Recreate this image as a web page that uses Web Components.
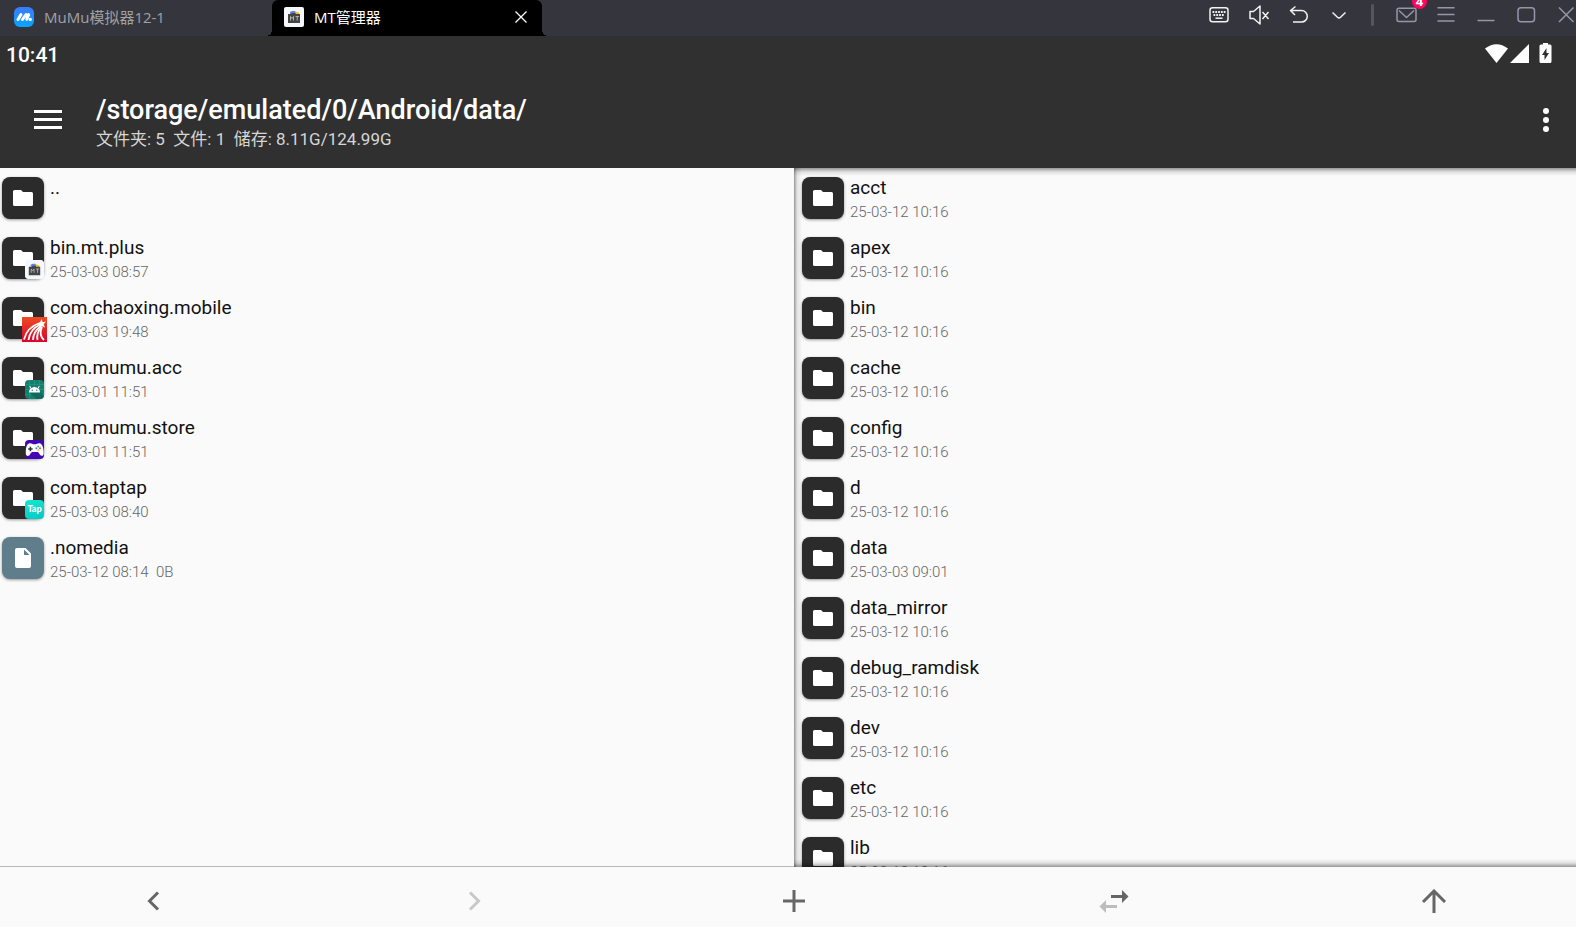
<!DOCTYPE html>
<html lang="zh-CN">
<head>
<meta charset="utf-8">
<title>MT管理器</title>
<style>
    html, body {
        height: 100%;
    }

    body {
        margin: 0;
        overflow: hidden;
        font-family: Roboto, "Noto Sans CJK SC", sans-serif;
        background: #fafafa;
    }
</style>
</head>
<body>
<emulator-window>
    <title-bar slot="titlebar">
        <window-tab label="MuMu模拟器12-1" icon="mumu"></window-tab>
        <window-tab label="MT管理器" icon="mt" active></window-tab>
    </title-bar>
    <status-bar time="10:41"></status-bar>
    <app-header>
        <span slot="path">/storage/emulated/0/Android/data/</span>
        <span slot="info">文件夹: 5&nbsp; 文件: 1&nbsp; 储存: 8.11G/124.99G</span>
    </app-header>
    <split-view>
        <file-list slot="left" data="local"></file-list>
        <file-list slot="right" data="root"></file-list>
    </split-view>
    <nav-bar></nav-bar>
</emulator-window>

<script>
const icons = {
    mumu: `<svg width="20" height="20" viewBox="0 0 20 20">
        <defs><linearGradient id="g" x1="0" y1="0" x2="0" y2="1"><stop offset="0" stop-color="#3a7bff"/><stop offset="1" stop-color="#08a6ff"/></linearGradient></defs>
        <rect width="20" height="20" rx="6" fill="url(#g)"/>
        <path d="M4 12.500 7 7.500M8.500 12.500 12 7.500M12.800 12.300 14.600 7.600" stroke="#fff" stroke-width="3" stroke-linecap="round"/>
        <circle cx="16.200" cy="12.400" r="1.700" fill="#fff"/></svg>`,
    mt: `<svg width="20" height="20" viewBox="0 0 20 20">
        <rect width="20" height="20" rx="2" fill="#f6f8ff"/>
        <path d="M6 7V5l2-1h3l2 3z" fill="#5b83ea"/><path d="M11 4.500l4 1V8h-3z" fill="#f2bb2c"/>
        <path d="M4 7h3l1-1h3l1 1h4v9H4z" fill="#454545"/>
        <path d="M6.500 13.500v-4l1.500 2 1.500-2v4M11.500 9.500h3.500M13.200 9.500v4" fill="none" stroke="#b8b8b8" stroke-width=".9"/></svg>`,
    chaoxing: `<svg width="25" height="25" viewBox="0 0 25 25">
        <defs><linearGradient id="g" x1="0" y1="0" x2="0" y2="1"><stop offset="0" stop-color="#ee4a24"/><stop offset="1" stop-color="#d8042a"/></linearGradient></defs>
        <rect width="25" height="25" fill="url(#g)"/>
        <g fill="none" stroke="#fff" stroke-width="1.800"><path d="M2 22.500Q5 10 18 6"/><path d="M6.500 23Q8 12 18.500 7.500"/><path d="M11 23Q11 15 19 9"/><path d="M15.500 23Q14 16 19.500 10"/><path d="M22 23Q16.500 18 20 10"/></g>
        <path d="M19.500 2l1.200 3.200 3.300-.6-2.300 2.600 1.300 3.200-3.200-1.200-2.700 2.300.2-3.600-3-1.500 3.700-1z" fill="#fff"/></svg>`,
    acc: `<svg width="19" height="19" viewBox="0 0 19 19">
        <rect width="19" height="19" rx="4" fill="#13806e"/>
        <path d="M0 4.500h19M0 9.500h19M0 14.500h19M4.500 0v19M9.500 0v19M14.500 0v19" stroke="#2b9584" stroke-width=".6"/>
        <path d="M15 12l4 4-1 2-2 1h-5l-7-7z" fill="#0a6053" opacity=".7"/>
        <path d="M4 12.500a5.500 5.500 0 0 1 11 0z" fill="#fff"/>
        <path d="M6 8.500 4.800 6M13 8.500 14.200 6" stroke="#fff"/>
        <circle cx="7.200" cy="10.300" r=".7" fill="#13806e"/><circle cx="11.800" cy="10.300" r=".7" fill="#13806e"/></svg>`,
    store: `<svg width="19" height="19" viewBox="0 0 19 19">
        <rect width="19" height="19" rx="4" fill="#4208b8"/>
        <path d="M.8 13.500C.8 8 1.500 4 4.500 3.300c2.300-.3 2.500 1 5 1s3.200-1.300 5.200-1c3 .5 4 5.500 4 10 0 3.500-3.200 3-4.200.7-.7-1.600-1.300-2-2.500-2H8c-1.200 0-2 .5-2.700 2-1 2.600-4.500 2.800-4.500-.5z" fill="#fff"/>
        <path d="M3.200 9h4.400M5.400 6.800v4.400" stroke="#333" stroke-width="1.500"/>
        <circle cx="13.200" cy="6.500" r="1" fill="#3fbf55"/><circle cx="11.400" cy="8.300" r="1" fill="#3d7bf2"/><circle cx="15" cy="8.300" r="1" fill="#ee4433"/><circle cx="13.200" cy="10.200" r="1" fill="#f6bd24"/></svg>`,
    folder: `<svg width="20" height="16" viewBox="0 0 20 16"><path d="M1.500 0H8l2 2h8.500A1.500 1.500 0 0 1 20 3.500v11a1.500 1.500 0 0 1-1.500 1.500h-17A1.500 1.500 0 0 1 0 14.500v-13A1.500 1.500 0 0 1 1.500 0z" fill="#fff"/></svg>`,
    file: `<svg width="16" height="20" viewBox="0 0 16 20"><path d="M2 0h8.500L16 5.500V18a2 2 0 0 1-2 2H2a2 2 0 0 1-2-2V2a2 2 0 0 1 2-2zM9 1.500V7h5.500z" fill="#fff" fill-rule="evenodd"/></svg>`,
    keyboard: `<rect x="1" y="2.800" width="18" height="14" rx="2.500"/><path d="M3.500 7h13M4.500 10h11" stroke-width="2" stroke-dasharray="1.800 1"/><path d="M6.500 13.200h7"/>`,
    mute: `<path d="M1 6.500h3.500L11 1v18l-6.500-5.500H1zM13.500 7l6 7M19.500 7l-6 7"/>`,
    undo: `<path d="M6.500 1.500 1.500 5.500 6 10M1.500 5.500H12.500a5.800 5.800 0 0 1 0 11.600H4"/>`,
    down: `<path d="M3.500 7.500 8.500 12.200Q10 13.500 11.500 12.200L16.500 7.500"/>`,
    mail: `<rect x="1" y="3.200" width="19" height="13.300" rx="2"/><path d="M3 5.500 10.500 12.500 18 5.500"/>`,
    menu: `<path d="M1.500 2.800h17M1.500 9.500h17M1.500 16h17"/>`,
    min: `<path d="M1.500 15.500h17"/>`,
    max: `<rect x="2" y="2.800" width="16.500" height="14" rx="3"/>`,
    close: `<path d="M3 2.500l14.500 14.500M17.500 2.500l-14.500 14.500"/>`
};

class EmulatorWindow extends HTMLElement {

    constructor() {
        super();
        this.shadowDOM = this.attachShadow({mode: "open"});
        this.shadowDOM.innerHTML = `
        <style>
            :host {
                display: flex;
                flex-direction: column;
                height: 100vh;
                overflow: hidden;
            }
        </style>
        <slot name="titlebar"></slot>
        <slot></slot>
        `;
    }
}

class TitleBar extends HTMLElement {

    constructor() {
        super();
        this.shadowDOM = this.attachShadow({mode: "open"});
    }

    connectedCallback() {
        this.render();
    }

    tool(name, label, badge) {
        return `<button aria-label="${label}" class="${name}">
            <svg width="20" height="20" viewBox="0 0 20 20">${icons[name]}</svg>
            ${badge ? `<span class="badge">${badge}</span>` : ""}
        </button>`;
    }

    render() {
        this.shadowDOM.innerHTML = `
        <style>
            :host {
                display: flex;
                flex: none;
                justify-content: space-between;
                height: 36px;
                overflow: hidden;
                background: #35363d;
            }

            .tabs {
                display: flex;
            }

            .tools {
                display: flex;
                height: 30px;
                margin-right: -10px;
            }

            button {
                position: relative;
                display: grid;
                place-items: center;
                width: 40px;
                padding: 0;
                border: 0;
                background: none;
                color: #9298a8;
            }

            .keyboard, .mute, .undo, .down {
                color: #f2f2f2;
            }

            svg {
                fill: none;
                overflow: visible;
                stroke: currentColor;
                stroke-width: 1.5;
                stroke-linejoin: round;
            }

            i {
                width: 3px;
                margin: 4px 12px;
                border-radius: 2px;
                background: #55565c;
            }

            .badge {
                position: absolute;
                top: -6px;
                left: 26px;
                width: 15px;
                border-radius: 8px;
                background: #ff0560;
                color: white;
                font: 700 13px/15px "Open Sans", sans-serif;
            }
        </style>
        <div class="tabs"><slot></slot></div>
        <div class="tools">
            ${this.tool("keyboard", "键盘")}
            ${this.tool("mute", "静音")}
            ${this.tool("undo", "返回")}
            ${this.tool("down", "更多")}
            <i></i>
            ${this.tool("mail", "消息", "4")}
            ${this.tool("menu", "菜单")}
            ${this.tool("min", "最小化")}
            ${this.tool("max", "最大化")}
            ${this.tool("close", "关闭")}
        </div>
        `;
    }
}

class WindowTab extends HTMLElement {

    constructor() {
        super();
        this.shadowDOM = this.attachShadow({mode: "open"});
    }

    connectedCallback() {
        this.render();
    }

    render() {
        this.shadowDOM.innerHTML = `
        <style>
            :host {
                position: relative;
                display: flex;
                align-items: center;
                box-sizing: border-box;
                width: 270px;
                padding: 0 14px 2px;
                color: #a0a1a5;
                font: 15px/20px "Open Sans", "Noto Sans CJK SC", sans-serif;
            }

            :host([active]) {
                margin-left: 2px;
                padding-left: 12px;
                border-radius: 6px 6px 0 0;
                background: black;
                color: white;
            }

            /* little feet where the active tab meets the bar */
            :host([active])::before,
            :host([active])::after {
                content: "";
                position: absolute;
                bottom: 0;
                width: 6px;
                height: 6px;
            }

            :host([active])::before {
                right: 100%;
                background: radial-gradient(circle at 0 0, transparent 6px, black 6px);
            }

            :host([active])::after {
                left: 100%;
                background: radial-gradient(circle at 100% 0, transparent 6px, black 6px);
            }

            span {
                flex: 1;
                margin-left: 10px;
            }

            svg {
                display: block;
            }

            button {
                padding: 0;
                border: 0;
                background: none;
            }
        </style>
        ${icons[this.getAttribute("icon")]}
        <span>${this.getAttribute("label")}</span>
        ${this.hasAttribute("active") ? `<button aria-label="关闭标签">
            <svg width="14" height="14" viewBox="0 0 14 14"><path d="M1.500 1.500l11 11M12.500 1.500l-11 11" stroke="#fff" stroke-width="1.300"/></svg>
        </button>` : ""}
        `;
    }
}

class StatusBar extends HTMLElement {

    constructor() {
        super();
        this.shadowDOM = this.attachShadow({mode: "open"});
    }

    connectedCallback() {
        this.shadowDOM.innerHTML = `
        <style>
            :host {
                display: flex;
                flex: none;
                justify-content: space-between;
                align-items: flex-start;
                box-sizing: border-box;
                height: 36px;
                padding: 7px 24px 0 6px;
                background: #303030;
                color: white;
                font-size: 21px;
                line-height: 24px;
                font-weight: 500;
            }

            svg {
                display: block;
            }
        </style>
        <span>${this.getAttribute("time")}</span>
        <svg width="67" height="20" viewBox="0 0 67 20" fill="#fff">
            <path d="M0 5.500Q11.500-3 23 5.500L11.500 20z"/>
            <path d="M25 20 44 1v19z"/>
            <path d="M56 1.500h2V0h5v1.500h2a1.500 1.500 0 0 1 1.500 1.500v15.500A1.500 1.500 0 0 1 65 20h-9a1.500 1.500 0 0 1-1.500-1.500V3A1.500 1.500 0 0 1 56 1.500z"/>
            <path d="M61.500 5v5h2.500l-4.500 7v-5H57z" fill="#303030"/>
        </svg>
        `;
    }
}

class AppHeader extends HTMLElement {

    constructor() {
        super();
        this.shadowDOM = this.attachShadow({mode: "open"});
        this.shadowDOM.innerHTML = `
        <style>
            :host {
                display: flex;
                flex: none;
                align-items: center;
                box-sizing: border-box;
                height: 96px;
                background: #303030;
                color: white;
            }

            button {
                display: grid;
                place-items: center;
                width: 96px;
                height: 96px;
                padding: 0;
                border: 0;
                background: none;
            }

            .more {
                width: 60px;
            }

            .titles {
                flex: 1;
                padding-top: 6px;
            }

            h1 {
                margin: 0;
                font-size: 27px;
                line-height: 32px;
                font-weight: 500;
            }

            p {
                margin: 0;
                color: #d6d6d6;
                font-size: 17px;
                line-height: 26px;
            }
        </style>
        <button aria-label="菜单">
            <svg width="28" height="20" viewBox="0 0 28 20"><path d="M0 1.500h28M0 9.500h28M0 17.500h28" stroke="#fff" stroke-width="3"/></svg>
        </button>
        <div class="titles">
            <h1><slot name="path"></slot></h1>
            <p><slot name="info"></slot></p>
        </div>
        <button class="more" aria-label="更多">
            <svg width="6" height="24" viewBox="0 0 6 24" fill="#fff"><circle cx="3" cy="3" r="3"/><circle cx="3" cy="12" r="3"/><circle cx="3" cy="21" r="3"/></svg>
        </button>
        `;
    }
}

class SplitView extends HTMLElement {

    constructor() {
        super();
        this.shadowDOM = this.attachShadow({mode: "open"});
        this.shadowDOM.innerHTML = `
        <style>
            :host {
                display: flex;
                flex: 1;
                min-height: 0;
                background: #fafafa;
            }

            .left {
                width: calc(50% + 6px);
                border-bottom: 1px solid #b9b9b9;
                overflow: hidden;
            }

            .right {
                position: relative;
                flex: 1;
                padding-left: 6px;
                overflow: hidden;
            }

            .right::after {
                content: "";
                position: absolute;
                inset: 0;
                pointer-events: none;
                background:
                    linear-gradient(to right, rgba(0, 0, 0, 0.4), rgba(0, 0, 0, 0.1) 3px, transparent 8px),
                    linear-gradient(to bottom, rgba(0, 0, 0, 0.4), rgba(0, 0, 0, 0.1) 4px, transparent 8px),
                    linear-gradient(to top, rgba(0, 0, 0, 0.4), rgba(0, 0, 0, 0.1) 4px, transparent 8px);
            }
        </style>
        <div class="left"><slot name="left"></slot></div>
        <div class="right"><slot name="right"></slot></div>
        `;
    }
}

class FileItem extends HTMLElement {

    constructor() {
        super();
        this.shadowDOM = this.attachShadow({mode: "open"});
    }

    set info(info) {
        this._info = info;
        this.render();
    }

    render() {
        const {name, date, badge, type = "folder"} = this._info;
        let overlay = "";
        if(badge == "tap") {
            overlay = `<span class="badge tap">Tap</span>`;
        } else if(badge) {
            overlay = `<span class="badge ${badge}">${icons[badge]}</span>`;
        }
        this.shadowDOM.innerHTML = `
        <style>
            :host {
                display: flex;
                align-items: center;
                gap: 6px;
                height: 60px;
                padding-left: 2px;
            }

            .icon {
                position: relative;
                display: grid;
                place-items: center;
                width: 42px;
                height: 42px;
                border-radius: 8px;
                background: #2b2b2b;
                box-shadow: 0 1px 3px rgba(0, 0, 0, 0.4);
            }

            .icon.file {
                background: #607d8b;
            }

            .badge {
                position: absolute;
                right: 0;
                bottom: 0;
                width: 19px;
                height: 19px;
            }

            .badge svg {
                display: block;
            }

            .badge.mt {
                border-radius: 4px;
                overflow: hidden;
                background: #f6f8ff;
            }

            .badge.mt svg {
                width: 19px;
                height: 19px;
            }

            .badge.chaoxing {
                right: -3px;
                bottom: -3px;
                width: 25px;
                height: 25px;
            }

            .badge.tap {
                border-radius: 4px;
                background: linear-gradient(160deg, #14e8cf, #04c8c8);
                color: white;
                font: 900 9px/18px Lato, sans-serif;
                text-align: center;
            }

            .text {
                height: 48px;
            }

            .name {
                color: #111;
                font-size: 19px;
                line-height: 28px;
            }

            .date {
                color: #666;
                font-size: 15px;
                font-weight: 300;
                line-height: 20px;
                white-space: pre;
            }
        </style>
        <div class="icon ${type}">${icons[type]}${overlay}</div>
        <div class="text">
            <div class="name">${name}</div>
            <div class="date">${date}</div>
        </div>
        `;
    }
}

const files = {
    local: [
        {name: "..", date: ""},
        {name: "bin.mt.plus", date: "25-03-03 08:57", badge: "mt"},
        {name: "com.chaoxing.mobile", date: "25-03-03 19:48", badge: "chaoxing"},
        {name: "com.mumu.acc", date: "25-03-01 11:51", badge: "acc"},
        {name: "com.mumu.store", date: "25-03-01 11:51", badge: "store"},
        {name: "com.taptap", date: "25-03-03 08:40", badge: "tap"},
        {name: ".nomedia", date: "25-03-12 08:14  0B", type: "file"}
    ],
    root: [
        {name: "acct", date: "25-03-12 10:16"},
        {name: "apex", date: "25-03-12 10:16"},
        {name: "bin", date: "25-03-12 10:16"},
        {name: "cache", date: "25-03-12 10:16"},
        {name: "config", date: "25-03-12 10:16"},
        {name: "d", date: "25-03-12 10:16"},
        {name: "data", date: "25-03-03 09:01"},
        {name: "data_mirror", date: "25-03-12 10:16"},
        {name: "debug_ramdisk", date: "25-03-12 10:16"},
        {name: "dev", date: "25-03-12 10:16"},
        {name: "etc", date: "25-03-12 10:16"},
        {name: "lib", date: "25-03-12 10:16"}
    ]
};

class FileList extends HTMLElement {

    constructor() {
        super();
        this.shadowDOM = this.attachShadow({mode: "open"});
    }

    connectedCallback() {
        this.render();
    }

    render() {
        this.shadowDOM.innerHTML = `
        <style>
            :host {
                display: block;
            }
        </style>
        `;
        files[this.getAttribute("data")].forEach(info => {
            const item = document.createElement("file-item");
            item.info = info;
            this.shadowDOM.appendChild(item);
        });
    }
}

class NavBar extends HTMLElement {

    constructor() {
        super();
        this.shadowDOM = this.attachShadow({mode: "open"});
        this.shadowDOM.innerHTML = `
        <style>
            :host {
                display: flex;
                flex: none;
                box-sizing: border-box;
                height: 60px;
                margin: 0 -18px 0 -6px;
                background: #fafafa;
            }

            button {
                flex: 1;
                padding: 0;
                border: 0;
                background: none;
                color: #666;
            }

            button:disabled {
                color: #c8c8c8;
            }

            svg {
                display: block;
                margin: 8px auto 0;
                fill: none;
                stroke: currentColor;
                stroke-width: 3;
            }
        </style>
        <button aria-label="后退"><svg width="30" height="24" viewBox="0 0 30 24"><path d="M19 3.500 10.500 12 19 20.500"/></svg></button>
        <button aria-label="前进" disabled><svg width="30" height="24" viewBox="0 0 30 24"><path d="M11 3.500 19.500 12 11 20.500"/></svg></button>
        <button aria-label="新建"><svg width="30" height="24" viewBox="0 0 30 24"><path d="M15 1v22M4 12h22"/></svg></button>
        <button aria-label="同步"><svg width="30" height="24" viewBox="0 0 30 24">
            <path d="M12 7.500h13"/><path d="M23 1l6.500 6.500L23 14z" fill="currentColor" stroke="none"/>
            <g color="#bdbdbd"><path d="M5 17.500h13"/><path d="M7 11 .5 17.500 7 24z" fill="currentColor" stroke="none"/></g>
        </svg></button>
        <button aria-label="上级"><svg width="30" height="24" viewBox="0 0 30 24"><path d="M15 24V2M4 13 15 2l11 11"/></svg></button>
        `;
    }
}

customElements.define("emulator-window", EmulatorWindow);
customElements.define("title-bar", TitleBar);
customElements.define("window-tab", WindowTab);
customElements.define("status-bar", StatusBar);
customElements.define("app-header", AppHeader);
customElements.define("split-view", SplitView);
customElements.define("file-item", FileItem);
customElements.define("file-list", FileList);
customElements.define("nav-bar", NavBar);
</script>
</body>
</html>
